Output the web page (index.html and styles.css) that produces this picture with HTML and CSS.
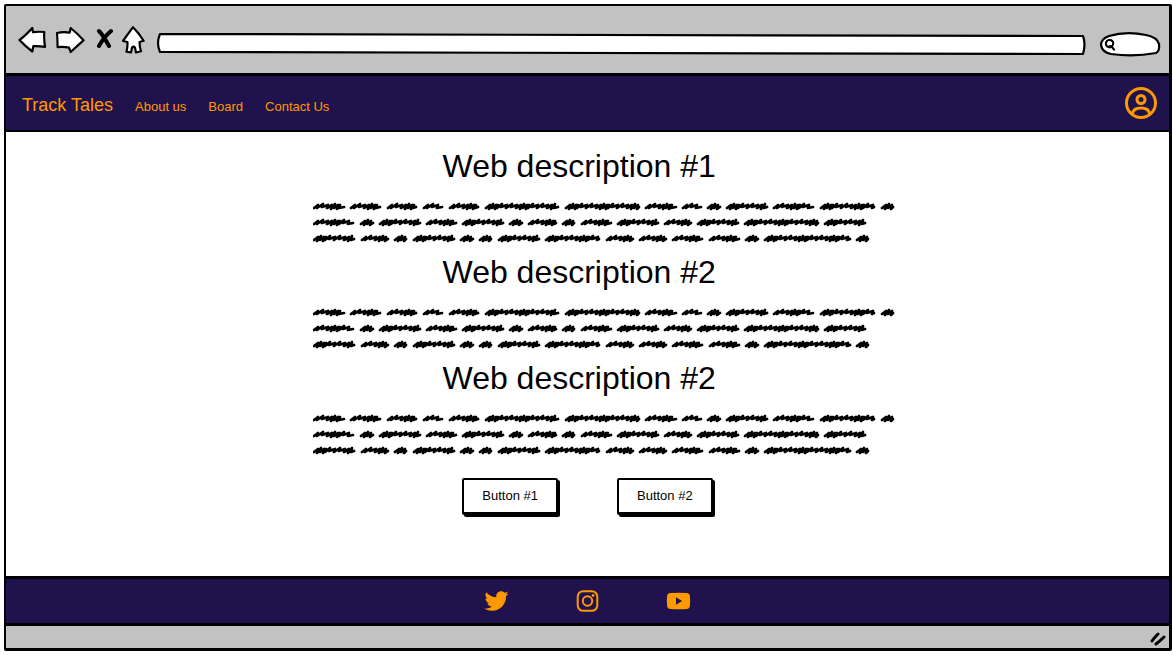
FILE: index.html
```html
<!DOCTYPE html>
<html lang="en">
<head>
<meta charset="utf-8">
<meta name="viewport" content="width=device-width, initial-scale=1">
<title>Track Tales</title>
<link rel="stylesheet" href="styles.css">
</head>
<body>
<div class="window">
  <div class="toolbar">
    <div class="controls">
      <button type="button" aria-label="Back"><svg width="28" height="28" viewBox="0 0 28 28" class="sketch"><path d="M1.5 14Q7 10 14.3 2L15 6.2Q20 5.4 26.3 6Q25.8 13 27 20.8Q21 20 15.3 20.2L14.3 25.5Q7 20 1.5 14Z"/></svg></button>
      <button type="button" aria-label="Forward"><svg width="30" height="28" viewBox="0 0 30 28" class="sketch"><path d="M2 7Q8 5.5 14.7 6.6L15.7 2Q23 8 28.5 14.3Q22 20 15.7 26L14 21.6Q8 20.4 2.6 21.2Q2.5 13 2 7Z"/></svg></button>
      <button type="button" aria-label="Stop"><svg width="19" height="28" viewBox="0 0 19 28" class="cross"><path d="M5 5Q9 9 15 20M17 5Q10 11 5 20"/></svg></button>
      <button type="button" aria-label="Home"><svg width="24" height="28" viewBox="0 0 24 28" class="sketch"><path d="M11 1.2Q17 7 21.600 14.800L17.600 16Q17.500 21 19 25.300L14 26.500L13 21.700Q11.500 19.700 10 21.700L9 26.500L4.400 25.700Q5.800 21 5.400 16L1 15Q6 8 11 1.200Z"/></svg></button>
    </div>
    <div class="address">
      <svg class="backdrop" viewBox="0 0 928 26" preserveAspectRatio="none"><path d="M3 3Q470 4 926 5Q929 13 926 23Q470 22 3 21Q-1 12 3 3Z"/></svg>
      <input type="text" aria-label="Address">
    </div>
    <div class="search">
      <svg class="backdrop" viewBox="0 0 60 26" preserveAspectRatio="none"><path d="M9 5Q26 0 46 4Q57 6 59 13Q60 20 56 22Q34 26 11 23Q2 21 1 14Q1 8 9 5Z"/></svg>
      <svg class="lens" width="12" height="12" viewBox="0 0 12 12"><path d="M7.8 7.6A3.7 3.7 0 1 1 9.2 3.6Q9.5 6 7.8 7.6L10 10.6M4.6 7.8Q6.8 6.4 7.8 7.8"/></svg>
      <input type="search" aria-label="Search">
    </div>
  </div>

  <header class="navbar">
    <nav class="links" aria-label="Main">
      <a class="brand" href="#">Track Tales</a>
      <a href="#">About us</a>
      <a href="#">Board</a>
      <a href="#">Contact Us</a>
    </nav>
    <a class="profile" href="#" aria-label="Profile">
      <svg width="32" height="32" viewBox="0 0 32 32"><circle cx="16" cy="16" r="14.5"/><circle cx="16" cy="12.5" r="4"/><path d="M7.500 27Q8 21 16 21Q24 21 24.500 27"/></svg>
    </a>
  </header>

  <main class="content">
    <section class="block">
      <h2>Web description #1</h2>
      <svg class="scribble" viewBox="0 0 582 48"></svg>
    </section>
    <section class="block">
      <h2>Web description #2</h2>
      <svg class="scribble" viewBox="0 0 582 48"></svg>
    </section>
    <section class="block">
      <h2>Web description #2</h2>
      <svg class="scribble" viewBox="0 0 582 48"></svg>
    </section>
    <div class="actions">
      <button type="button">Button #1</button>
      <button type="button">Button #2</button>
    </div>
  </main>

  <footer class="social">
    <a href="#" aria-label="Twitter"><svg width="25" height="24" viewBox="0 0 512 512"><path d="M459.370 151.716c.325 4.548.325 9.097.325 13.645 0 138.720-105.583 298.558-298.558 298.558-59.452 0-114.680-17.219-161.137-47.106 8.447.974 16.568 1.299 25.340 1.299 49.055 0 94.213-16.568 130.274-44.832-46.132-.975-84.792-31.188-98.112-72.772 6.498.974 12.995 1.624 19.818 1.624 9.421 0 18.843-1.300 27.614-3.573-48.081-9.747-84.143-51.980-84.143-102.985v-1.299c13.969 7.797 30.214 12.670 47.431 13.319-28.264-18.843-46.781-51.005-46.781-87.391 0-19.492 5.197-37.360 14.294-52.954 51.655 63.675 129.300 105.258 216.365 109.807-1.624-7.797-2.599-15.918-2.599-24.040 0-57.828 46.782-104.934 104.934-104.934 30.213 0 57.502 12.670 76.670 33.137 23.715-4.548 46.456-13.320 66.599-25.340-7.798 24.366-24.366 44.833-46.132 57.827 21.117-2.273 41.584-8.122 60.426-16.243-14.292 20.791-32.161 39.308-52.628 54.253z"/></svg></a>
    <a href="#" aria-label="Instagram"><svg width="25" height="24" viewBox="0 0 24 24"><rect class="line" x="2.200" y="2.200" width="19.600" height="19.600" rx="5.500"/><circle class="line" cx="12" cy="12" r="4.700"/><circle cx="17.600" cy="6.400" r="1.400"/></svg></a>
    <a href="#" aria-label="YouTube"><svg width="25" height="24" viewBox="0 0 24 24"><path fill-rule="evenodd" d="M4 4Q12 3.500 20 4Q23 4.200 23.400 7Q24 12 23.400 17Q23 19.800 20 20Q12 20.500 4 20Q1 19.800 .6 17Q0 12 .6 7Q1 4.200 4 4ZM9.500 8.200V15.800L15.600 12Z"/></svg></a>
  </footer>

  <div class="statusbar">
    <svg width="18" height="14" viewBox="0 0 18 14"><path d="M3 9Q5 6 9 2M7 12Q11 9 15 5"/></svg>
  </div>
</div>
<script src="scribble.js"></script>
</body>
</html>
```
FILE: styles.css
```css
* {
  box-sizing: border-box;
}

body {
  margin: 0;
  background: #fff;
  color: #000;
  font-family: "Liberation Sans", Arial, sans-serif;
  font-size: 13px;
}

a {
  color: inherit;
  text-decoration: none;
}

svg {
  display: block;
}

.window {
  display: flex;
  flex-direction: column;
  min-height: calc(100vh - 8px);
  margin: 4px 1px 4px 4px;
  border: 2px solid #000;
  border-bottom-width: 3px;
  border-right-width: 3px;
  border-radius: 2px;
}

/* Browser toolbar */
.toolbar {
  display: flex;
  align-items: flex-end;
  gap: 11px;
  padding: 20px 9px 16px 12px;
  background: #c2c2c2;
}

.controls {
  display: flex;
  gap: 9px;
  padding-bottom: 3px;
}

.controls button {
  padding: 0;
  border: 0;
  background: none;
}

.sketch {
  fill: #fff;
  stroke: #000;
  stroke-width: 2.2;
  stroke-linejoin: round;
}

.cross {
  fill: none;
  stroke: #000;
  stroke-width: 4;
  stroke-linecap: round;
}

.address,
.search {
  position: relative;
  height: 26px;
}

.address {
  flex: 1;
}

.search {
  width: 60px;
  margin-left: 4px;
}

.backdrop {
  position: absolute;
  inset: 0;
  width: 100%;
  height: 100%;
  overflow: visible;
}

.backdrop path {
  fill: #fff;
  stroke: #000;
  stroke-width: 2.2;
  stroke-linejoin: round;
  vector-effect: non-scaling-stroke;
}

.lens {
  position: absolute;
  left: 4px;
  top: 8px;
  fill: none;
  stroke: #000;
  stroke-width: 2;
  stroke-linecap: round;
}

.address input,
.search input {
  position: relative;
  width: 100%;
  height: 100%;
  padding: 0 8px;
  border: 0;
  background: none;
  font: inherit;
}

.search input {
  padding-left: 18px;
}

/* Site header */
.navbar {
  display: flex;
  align-items: center;
  justify-content: space-between;
  padding: 11px 12px 11px 16px;
  border: solid #000;
  border-width: 3px 0 2px;
  background: #20124d;
  color: #ff9900;
}

.links {
  display: flex;
  align-items: baseline;
  gap: 22px;
  padding-top: 4px;
}

.brand {
  font-size: 18px;
}

.profile svg {
  fill: none;
  stroke: #ff9900;
  stroke-width: 3;
}

/* Page content */
.content {
  flex: 1;
  padding: 14px 16px;
}

.block {
  max-width: 614px;
  margin: 0 auto 6px;
  padding-left: 32px;
}

.block h2 {
  margin: 0 0 12px;
  padding-left: 130px;
  font-size: 32px;
  font-weight: 400;
  line-height: 40px;
}

.scribble {
  width: 100%;
  fill: none;
  stroke: #000;
  stroke-width: 2.7;
  stroke-linecap: round;
  stroke-linejoin: round;
}

.actions {
  display: flex;
  justify-content: center;
  gap: 59px;
  padding-top: 14px;
}

.actions button {
  padding: 9px 18px;
  border: 2px solid #000;
  border-bottom-width: 3px;
  border-radius: 2px;
  background: #fff;
  box-shadow: 2px 2px 0 #000;
  color: #000;
  font: inherit;
  line-height: 14px;
}

/* Social footer */
.social {
  display: flex;
  justify-content: center;
  gap: 66px;
  padding: 10px;
  border: solid #000;
  border-width: 3px 0;
  background: #20124d;
}

.social svg {
  fill: #ff9900;
}

.social .line {
  fill: none;
  stroke: #ff9900;
  stroke-width: 2;
}

.statusbar {
  display: flex;
  justify-content: flex-end;
  padding: 6px 2px 2px;
  background: #c2c2c2;
}

.statusbar svg {
  fill: none;
  stroke: #000;
  stroke-width: 3;
  stroke-linecap: round;
}
```
FILE: scribble.js
```js
// Start and end of every scribbled word, line by line.
const lines = [
  [[0, 32], [37, 68], [74, 104], [110, 130], [136, 166], [172, 246], [252, 327], [332, 364], [369, 389], [394, 408], [413, 455], [460, 501], [507, 562], [568, 581]],
  [[0, 41], [47, 61], [66, 108], [113, 144], [149, 191], [196, 210], [215, 244], [249, 262], [268, 299], [304, 346], [351, 379], [384, 426], [431, 506], [511, 553]],
  [[0, 42], [48, 76], [81, 94], [100, 142], [147, 161], [166, 179], [185, 227], [232, 287], [293, 321], [326, 354], [359, 390], [396, 427], [432, 446], [451, 538], [543, 556]]
];

// Each stroke: advance, top and bottom, loose strokes then tight ones.
const strokes = [[5, -1, 2], [5, -2, 1], [4, -1, 2], [3, -1, 3], [3, -2, 2], [2, -1, 3], [4, -1, 2], [5, -2, 1]];

function word(start, end, middle) {
  const narrow = end - start < 16;
  let x = start + 1;
  let i = narrow || end - start > 41 ? 3 : 0;
  let d = `M${x} ${middle + 2}`;
  while (x + 4 < end - 1) {
    const [step, top, bottom] = strokes[i++ % strokes.length];
    d += `L${x + 4} ${middle + top}L${x + 3} ${middle + bottom}`;
    x += step;
  }
  return d + `L${end - 1} ${middle + 1}`;
}

const scribble = lines
  .map((words, row) => words.map(([a, b]) => word(a, b, 8 + row * 16)).join(""))
  .join("");

for (const svg of document.querySelectorAll(".scribble")) {
  const path = document.createElementNS("http://www.w3.org/2000/svg", "path");
  path.setAttribute("d", scribble);
  svg.append(path);
}
```
